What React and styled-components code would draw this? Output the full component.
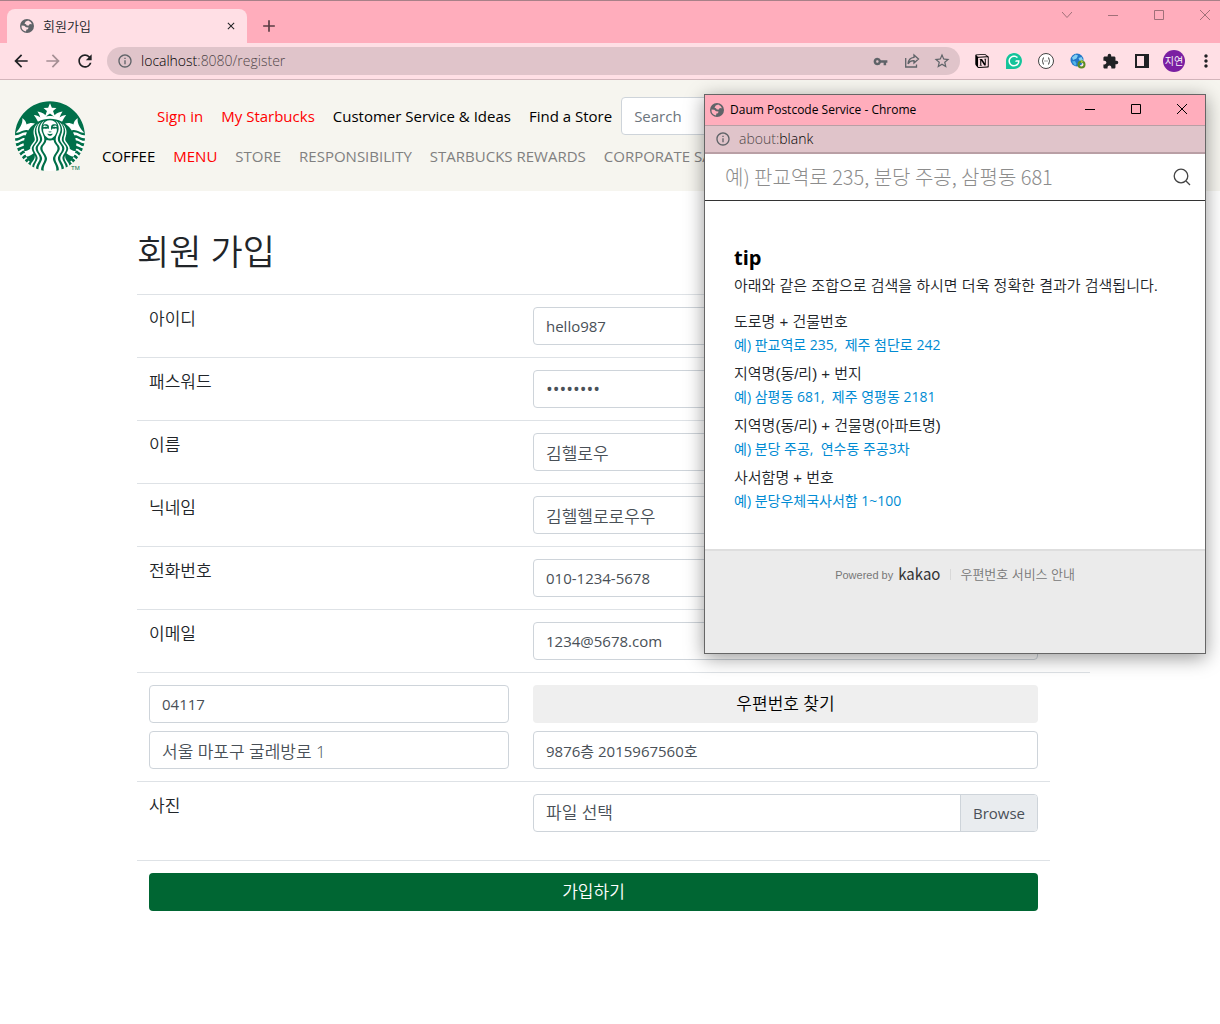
import React from "react";
import styled, { createGlobalStyle } from "styled-components";
import {
  MdArrowBack, MdArrowForward, MdRefresh, MdClose, MdAdd, MdInfoOutline,
  MdVpnKey, MdStarBorder, MdExtension, MdMoreVert,
} from "react-icons/md";
import { SiStarbucks, SiGrammarly, SiNotion } from "react-icons/si";

const latin = '"Open Sans", "Noto Sans CJK KR", sans-serif';

const GlobalStyle = createGlobalStyle`
  *, *::before, *::after { box-sizing: border-box; }
  body { margin: 0; background: #fff; font: 350 16px/24px ${latin}; color: #212529; }
  button, input { font: inherit; margin: 0; }
  button { cursor: pointer; }
  a { color: inherit; text-decoration: none; }
`;

/* ---------- browser frame ---------- */

const Strip = styled.div`
  display: flex;
  align-items: flex-end;
  justify-content: space-between;
  height: 43px;
  padding-left: 7px;
  background: #ffadbc;
  border-top: 1px solid #a88088;
  overflow: hidden;
`;

const TabGroup = styled.div`
  display: flex;
  align-items: center;
  gap: 14px;
`;

const Tab = styled.div`
  display: flex;
  align-items: center;
  gap: 9px;
  width: 240px;
  height: 34px;
  padding: 0 10px 0 13px;
  background: #ffdfe5;
  border-radius: 8px 8px 0 0;
  font-size: 13px;
  line-height: 20px;
`;

const TabTitle = styled.span`
  flex: 1;
`;

const IconButton = styled.button`
  display: flex;
  align-items: center;
  justify-content: center;
  flex: none;
  width: ${(p) => p.$w || 16}px;
  height: ${(p) => p.$h || 16}px;
  padding: 0;
  border: 0;
  background: none;
  color: ${(p) => p.$color || "#202124"};
`;

const WindowButtons = styled.div`
  display: flex;
  align-self: flex-start;
  margin-right: ${(p) => (p.$flush ? -8 : 0)}px;
`;

const Toolbar = styled.div`
  display: flex;
  align-items: center;
  height: 37px;
  padding-left: 5px;
  background: #ffdfe5;
  border-bottom: 1px solid #d3b5bb;
`;

const Address = styled.div`
  display: flex;
  align-items: center;
  flex: 1;
  gap: 8px;
  height: 28px;
  margin: 0 6px;
  padding: 0 8px 0 10px;
  border-radius: 14px;
  background: #e0c4ca;
  color: #5f6368;
`;

const Url = styled.span`
  flex: 1;
  font-size: 14px;
  line-height: 20px;
  color: #504649;
  b { font-weight: inherit; color: #000; }
`;

const Avatar = styled.button`
  width: 22px;
  height: 22px;
  margin: 0 7px 0 5px;
  padding: 0;
  border: 0;
  border-radius: 50%;
  background: #7b1fa2;
  color: #fff;
  font-size: 10px;
  line-height: 22px;
  white-space: nowrap;
`;

/* ---------- site header ---------- */

const SiteHeader = styled.header`
  display: flex;
  align-items: center;
  gap: 8px;
  padding: 16px 15px 15px;
  background: #f6f5ef;
  overflow: hidden;
`;

const Logo = styled.a`
  display: flex;
  align-items: flex-end;
  flex: none;
  width: 70px;
  height: 70px;
  border-radius: 50%;
  background: #fff;
  color: #00704a;
  svg { flex: none; }
`;

const Trademark = styled.span`
  flex: none;
  margin-left: -14px;
  font: 400 6px/6px "Liberation Sans", sans-serif;
`;

const Menus = styled.div`
  flex: 1;
  min-width: 0;
`;

const Menu = styled.nav`
  display: flex;
  align-items: center;
  height: 40px;
  padding-left: ${(p) => p.$indent || 0}px;
  font-size: 15px;
  font-weight: 400;
  white-space: nowrap;
`;

const MenuLink = styled.a`
  padding: 8px 9px;
  color: ${(p) => p.$color || "#000"};
`;

const Field = styled.input`
  display: block;
  width: 100%;
  min-width: 0;
  height: 38px;
  padding: 6px 12px;
  border: 1px solid #ced4da;
  border-radius: 4px;
  background: #fff;
  color: #495057;
  font-size: ${(p) => p.$size || 15}px;
  font-weight: ${(p) => (p.$size === 17 ? 350 : 400)};
  &::placeholder { color: #6c757d; opacity: 1; }
`;

const SearchField = styled(Field)`
  width: 200px;
`;

/* ---------- form ---------- */

const Main = styled.main`
  padding: 40px 130px 80px 137px;
`;

const Title = styled.h2`
  margin: 0 0 21px;
  font-size: 35px;
  font-weight: 350;
  line-height: 42px;
`;

const Row = styled.div`
  display: grid;
  grid-template-columns: 360fr 505fr;
  gap: 8px 24px;
  align-items: start;
  margin-right: ${(p) => (p.$wide ? 0 : 40)}px;
  padding: 12px ${(p) => (p.$wide ? 52 : 12)}px ${(p) => p.$bottom || 12}px 12px;
  border-top: 1px solid #dee2e6;
`;

const Label = styled.label`
  font-size: 17px;
`;

const Button = styled.button`
  height: 38px;
  padding: 6px 12px;
  border: 0;
  border-radius: 4px;
  background: ${(p) => (p.$primary ? "#006633" : "#efefef")};
  color: ${(p) => (p.$primary ? "#fff" : "#000")};
  font-size: 17px;
  grid-column: ${(p) => (p.$primary ? "1 / -1" : "auto")};
`;

const FileBox = styled.div`
  position: relative;
  display: flex;
  height: 38px;
  border: 1px solid #ced4da;
  border-radius: 4px;
  color: #495057;
  font-size: 17px;
  overflow: hidden;
`;

const FileName = styled.span`
  flex: 1;
  padding: 6px 12px;
`;

const Browse = styled.span`
  padding: 6px 12px;
  border-left: 1px solid #ced4da;
  background: #e9ecef;
  font-size: 15px;
  font-weight: 400;
`;

const FileInput = styled.input`
  position: absolute;
  inset: 0;
  width: 100%;
  opacity: 0;
`;

/* ---------- postcode window ---------- */

const Popup = styled.section`
  position: absolute;
  top: 94px;
  right: 14px;
  width: 502px;
  border: 1px solid #666;
  background: #fff;
  box-shadow: 0 4px 18px rgba(0, 0, 0, 0.4);
`;

const PopupBar = styled.div`
  display: flex;
  align-items: center;
  gap: 6px;
  height: 30px;
  padding-left: 5px;
  background: #ffadbc;
  color: #000;
  font-size: 12px;
  font-weight: 400;
  line-height: 20px;
`;

const PopupTitle = styled.span`
  flex: 1;
`;

const PopupAddress = styled.div`
  display: flex;
  align-items: center;
  gap: 8px;
  height: 29px;
  padding-left: 10px;
  border: solid #b99fa5;
  border-width: 1px 0 2px;
  background: #e0c4ca;
  color: #5f6368;
`;

const PostSearch = styled.form`
  display: flex;
  align-items: center;
  height: 47px;
  padding: 0 14px 0 20px;
  border-bottom: 1px solid #333;
`;

const PostInput = styled.input`
  flex: 1;
  min-width: 0;
  padding: 0;
  border: 0;
  outline: 0;
  font: 300 20px/30px "Noto Sans CJK KR", sans-serif;
  &::placeholder { color: #8c8c8c; opacity: 1; }
`;

const Tips = styled.div`
  padding: 40px 29px 37px;
  font-family: "Liberation Sans", "Noto Sans CJK KR", sans-serif;
  font-size: 15px;
`;

const TipTitle = styled.h3`
  margin: 0;
  color: #000;
  font: 700 20px/33px ${latin};
`;

const TipLead = styled.p`
  margin: 0 0 12px;
  white-space: nowrap;
`;

const TipList = styled.dl`
  margin: 0;
  dd {
    margin: 0 0 6px;
    color: #008bd3;
    font: 400 14px/22px ${latin};
  }
  dd:last-child { margin: 0; }
`;

const PopupFooter = styled.footer`
  display: flex;
  justify-content: center;
  align-items: flex-start;
  height: 104px;
  padding-top: 13px;
  border-top: 2px solid #dedede;
  background: #ebebeb;
  color: #777;
  font-size: 13px;
  line-height: 20px;
`;

const Powered = styled.a`
  display: flex;
  gap: 5px;
  color: #777;
  font: 400 11px/22px "Liberation Sans", sans-serif;
`;

const Kakao = styled.span`
  color: #333;
  font: 400 15px/20px "Noto Sans CJK KR", sans-serif;
`;

const Guide = styled.a`
  margin-left: 10px;
  padding-left: 10px;
  background: linear-gradient(#d8d8d8, #d8d8d8) 0 5px / 1px 11px no-repeat;
`;

/* ---------- drawings ---------- */

const Globe = ({ bg }) => (
  <svg width="14" height="14" viewBox="0 0 14 14" aria-hidden="true">
    <circle cx="7" cy="7" r="7" fill="#5f6368" />
    <path fill={bg} d="M8.200 1.500 5.700 2.600 4.500 4.800 6 5.300 6.800 6.600 8.900 6.400 9.700 5 12 5.300A5.600 5.600 0 0 0 8.200 1.500ZM1.500 6.500 4.300 6.700 6 8.300 8.500 8.600 8 10.200 6.400 10.600 6 12.500A5.600 5.600 0 0 1 1.500 6.500Z" />
  </svg>
);

const Minimize = () => (
  <svg width="10" height="10" viewBox="0 0 10 10"><path d="M0 5.500H10" stroke="currentColor" /></svg>
);
const Maximize = () => (
  <svg width="10" height="10" viewBox="0 0 10 10"><path d="M.5.5h9v9h-9z" fill="none" stroke="currentColor" /></svg>
);
const CloseWindow = () => (
  <svg width="10" height="10" viewBox="0 0 10 10"><path d="M0 0 10 10M10 0 0 10" stroke="currentColor" /></svg>
);
const Chevron = () => (
  <svg width="10" height="10" viewBox="0 0 10 10"><path d="M0 2 5 7.500 10 2" fill="none" stroke="currentColor" /></svg>
);
const Share = () => (
  <svg width="16" height="16" viewBox="0 0 16 16" fill="none" stroke="currentColor" strokeWidth="1.300">
    <path d="M1.700 5v9h10.800v-2.500M10 1.900l4.500 4.100-4.500 4V7.700C7.300 7.600 5.300 8.600 4 10.800 4.300 7.200 6.500 4.600 10 4.300Z" />
  </svg>
);
const Braces = () => (
  <svg width="16" height="16" viewBox="0 0 16 16" fill="none" stroke="#444">
    <circle cx="8" cy="8" r="7.500" fill="#fff" />
    <path d="M6 4.500C4.500 4.500 5.500 7.500 4 8c1.500.5.500 3.500 2 3.500M10 4.500c1.500 0 .5 3 2 3.500-1.500.5-.5 3.500-2 3.500M6.500 8h1M8.500 8h1" />
  </svg>
);
const EarthSync = () => (
  <svg width="16" height="16" viewBox="0 0 16 16">
    <circle cx="7" cy="7" r="6.500" fill="#2378c8" />
    <path d="M2 4.500 5.500 1.500 8 2.500 6.500 5.500 3 7ZM8.500 5l3-1 1.500 3-3 1.500Z" fill="#84cff2" />
    <path d="M2 8.500 5 8l1.500 3L5 13Z" fill="#54b4e8" />
    <circle cx="11.500" cy="11.500" r="3" fill="none" stroke="#5d8c22" strokeWidth="2" />
    <path d="m11 6.500 2.500 2-2.500 2z" fill="#9bc53d" />
  </svg>
);
const SidePanel = () => (
  <svg width="14" height="14" viewBox="0 0 14 14">
    <path d="M0 0h14v14H0zM2 2v10h7V2z" fill="#202124" fillRule="evenodd" />
  </svg>
);
const Magnifier = () => (
  <svg width="18" height="18" viewBox="0 0 18 18" fill="none" stroke="#444" strokeWidth="1.300">
    <circle cx="8" cy="8" r="6.800" /><path d="m13 13 4 4" />
  </svg>
);
const GrammarlyBadge = styled.span`
  display: flex;
  border-radius: 50%;
  background: #fff;
  color: #15c39a;
`;

const WindowControls = ({ color }) => (
  <>
    <IconButton $w={46} $h={28} $color={color} aria-label="Minimize"><Minimize /></IconButton>
    <IconButton $w={46} $h={28} $color={color} aria-label="Maximize"><Maximize /></IconButton>
    <IconButton $w={46} $h={28} $color={color} aria-label="Close"><CloseWindow /></IconButton>
  </>
);

/* ---------- data ---------- */

const topLinks = [
  ["Sign in", "#f00"],
  ["My Starbucks", "#f00"],
  ["Customer Service & Ideas"],
  ["Find a Store"],
];

const mainLinks = [
  ["COFFEE", "#000"],
  ["MENU", "#f00"],
  ["STORE", "#808080"],
  ["RESPONSIBILITY", "#808080"],
  ["STARBUCKS REWARDS", "#808080"],
  ["CORPORATE SALES", "#808080"],
];

const fields = [
  { id: "userid", label: "아이디", value: "hello987" },
  { id: "password", label: "패스워드", value: "hello987", type: "password", size: 18 },
  { id: "name", label: "이름", value: "김헬로우", size: 17 },
  { id: "nickname", label: "닉네임", value: "김헬헬로로우우", size: 17 },
  { id: "phone", label: "전화번호", value: "010-1234-5678" },
  { id: "email", label: "이메일", value: "1234@5678.com" },
];

const tips = [
  ["도로명 + 건물번호", "예) 판교역로 235,\u00a0 제주 첨단로 242"],
  ["지역명(동/리) + 번지", "예) 삼평동 681,\u00a0 제주 영평동 2181"],
  ["지역명(동/리) + 건물명(아파트명)", "예) 분당 주공,\u00a0 연수동 주공3차"],
  ["사서함명 + 번호", "예) 분당우체국사서함 1~100"],
];

function BrowserFrame() {
  return (
    <div>
      <Strip>
        <TabGroup>
          <Tab>
            <Globe bg="#ffdfe5" />
            <TabTitle>회원가입</TabTitle>
            <IconButton $w={12} aria-label="Close tab"><MdClose size={16} /></IconButton>
          </Tab>
          <IconButton aria-label="New tab" $color="#5a3d43"><MdAdd size={20} style={{ flex: "none" }} /></IconButton>
        </TabGroup>
        <WindowButtons $flush>
          <IconButton $w={46} $h={28} $color="#a07078" aria-label="Search tabs"><Chevron /></IconButton>
          <WindowControls color="#a07078" />
        </WindowButtons>
      </Strip>
      <Toolbar>
        <IconButton $w={32} aria-label="Back"><MdArrowBack size={20} /></IconButton>
        <IconButton $w={32} $color="#a58f94" aria-label="Forward"><MdArrowForward size={20} /></IconButton>
        <IconButton $w={32} aria-label="Reload"><MdRefresh size={20} /></IconButton>
        <Address>
          <MdInfoOutline size={16} />
          <Url><b>localhost</b>:8080/register</Url>
          <IconButton $w={24} $color="#5f6368" aria-label="Passwords"><MdVpnKey size={15} /></IconButton>
          <IconButton $w={24} $color="#5f6368" aria-label="Share"><Share /></IconButton>
          <IconButton $w={20} $color="#5f6368" aria-label="Bookmark"><MdStarBorder size={18} /></IconButton>
        </Address>
        <IconButton $w={32} $color="#000" aria-label="Notion"><SiNotion size={14} /></IconButton>
        <IconButton $w={32} aria-label="Grammarly"><GrammarlyBadge><SiGrammarly size={16} /></GrammarlyBadge></IconButton>
        <IconButton $w={32} aria-label="JSON viewer"><Braces /></IconButton>
        <IconButton $w={32} aria-label="Translate"><EarthSync /></IconButton>
        <IconButton $w={32} aria-label="Extensions"><MdExtension size={17} /></IconButton>
        <IconButton $w={32} aria-label="Side panel"><SidePanel /></IconButton>
        <Avatar>지연</Avatar>
        <IconButton $w={28} aria-label="Menu"><MdMoreVert size={20} /></IconButton>
      </Toolbar>
    </div>
  );
}

function PostcodeWindow() {
  return (
    <Popup>
      <PopupBar>
        <Globe bg="#ffadbc" />
        <PopupTitle>Daum Postcode Service - Chrome</PopupTitle>
        <WindowButtons><WindowControls color="#000" /></WindowButtons>
      </PopupBar>
      <PopupAddress>
        <MdInfoOutline size={16} />
        <Url>about:<b>blank</b></Url>
      </PopupAddress>
      <PostSearch onSubmit={(e) => e.preventDefault()}>
        <PostInput aria-label="주소 검색" placeholder="예) 판교역로 235, 분당 주공, 삼평동 681" />
        <IconButton $w={18} $h={18} aria-label="검색"><Magnifier /></IconButton>
      </PostSearch>
      <Tips>
        <TipTitle>tip</TipTitle>
        <TipLead>아래와 같은 조합으로 검색을 하시면 더욱 정확한 결과가 검색됩니다.</TipLead>
        <TipList>
          {tips.map(([term, example]) => (
            <React.Fragment key={term}>
              <dt>{term}</dt>
              <dd>{example}</dd>
            </React.Fragment>
          ))}
        </TipList>
      </Tips>
      <PopupFooter>
        <Powered href="#kakao">Powered by <Kakao>kakao</Kakao></Powered>
        <Guide href="#guide">우편번호 서비스 안내</Guide>
      </PopupFooter>
    </Popup>
  );
}

export default function App() {
  return (
    <>
      <GlobalStyle />
      <BrowserFrame />
      <SiteHeader>
        <Logo href="#home" aria-label="Starbucks">
          <SiStarbucks size={70} />
          <Trademark>TM</Trademark>
        </Logo>
        <Menus>
          <Menu $indent={55}>
            {topLinks.map(([text, color]) => (
              <MenuLink key={text} href="#top" $color={color}>{text}</MenuLink>
            ))}
            <SearchField placeholder="Search" aria-label="Search" />
          </Menu>
          <Menu>
            {mainLinks.map(([text, color]) => (
              <MenuLink key={text} href="#main" $color={color}>{text}</MenuLink>
            ))}
          </Menu>
        </Menus>
      </SiteHeader>
      <Main>
        <Title>회원 가입</Title>
        <form onSubmit={(e) => e.preventDefault()}>
          {fields.map((f) => (
            <Row key={f.id} $wide>
              <Label htmlFor={f.id}>{f.label}</Label>
              <Field id={f.id} type={f.type || "text"} defaultValue={f.value} $size={f.size} />
            </Row>
          ))}
          <Row $wide>
            <Field aria-label="우편번호" defaultValue="04117" />
            <Button type="button">우편번호 찾기</Button>
            <Field aria-label="주소" defaultValue="서울 마포구 굴레방로 1" $size={17} />
            <Field aria-label="상세 주소" defaultValue="9876층 2015967560호" />
          </Row>
          <Row $bottom={28}>
            <Label htmlFor="photo">사진</Label>
            <FileBox>
              <FileName>파일 선택</FileName>
              <Browse>Browse</Browse>
              <FileInput id="photo" type="file" />
            </FileBox>
          </Row>
          <Row>
            <Button type="submit" $primary>가입하기</Button>
          </Row>
        </form>
      </Main>
      <PostcodeWindow />
    </>
  );
}
